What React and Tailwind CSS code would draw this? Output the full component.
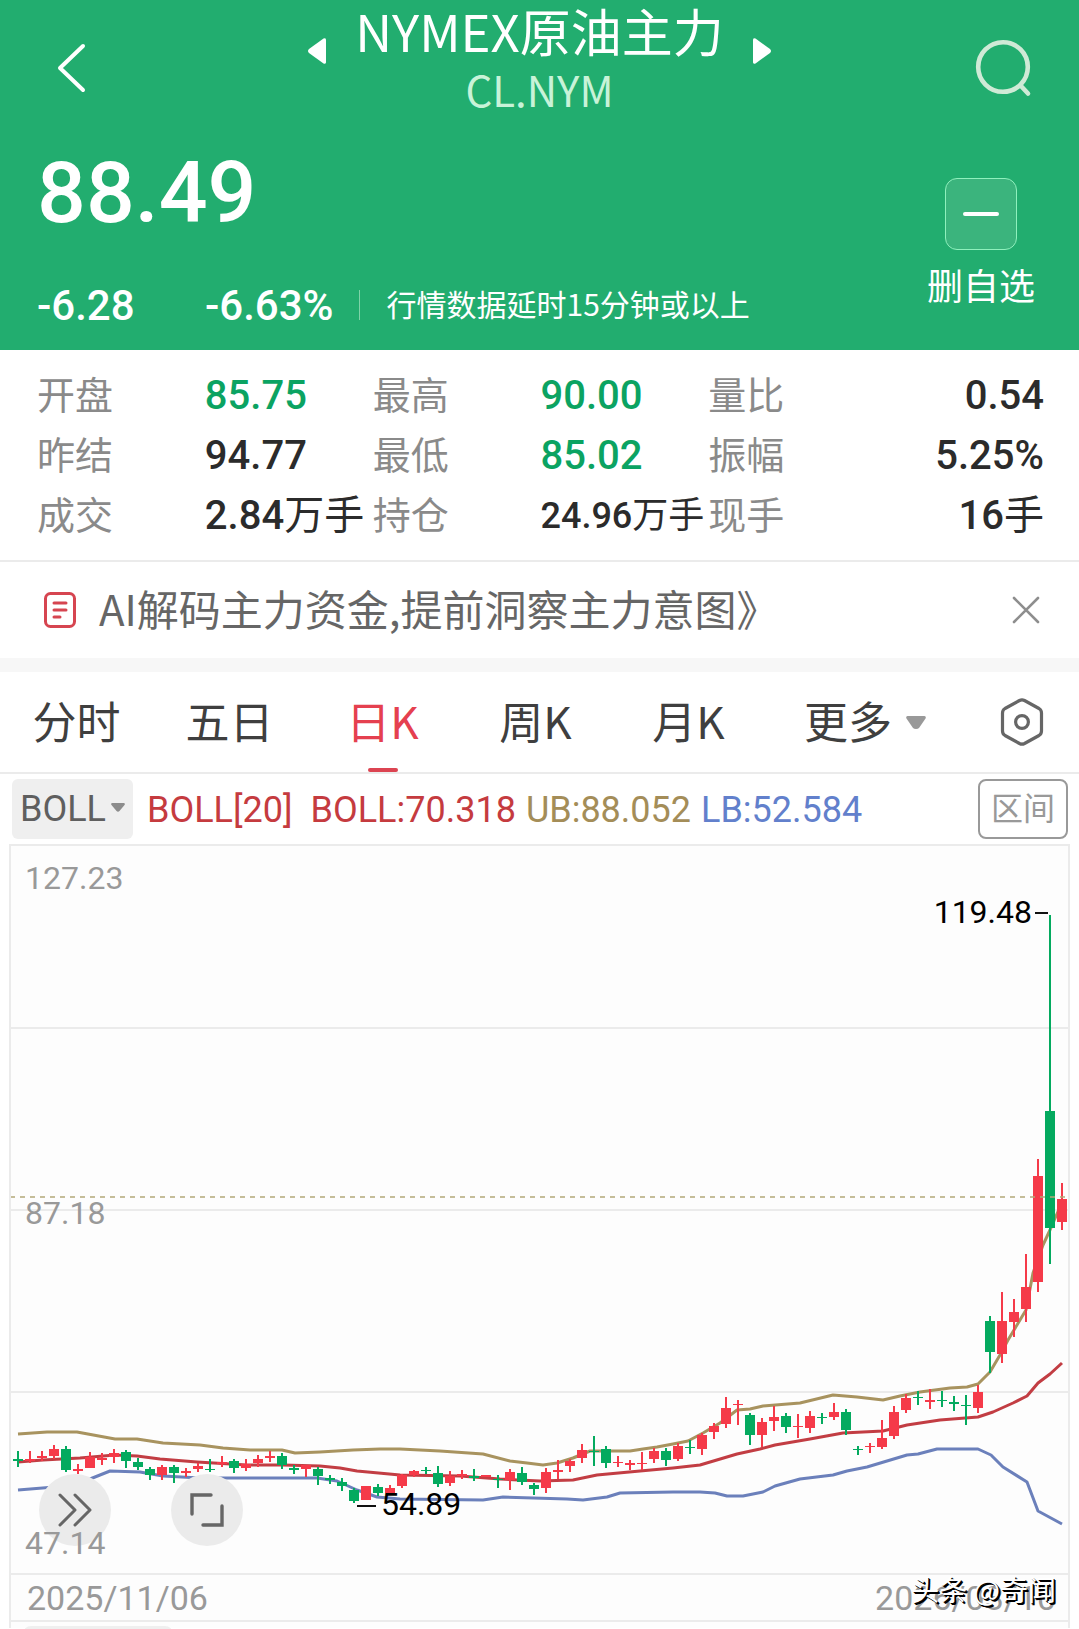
import { useState } from 'react';

const quote = {
  name: 'NYMEX原油主力',
  code: 'CL.NYM',
  price: '88.49',
  change: '-6.28',
  percent: '-6.63%',
  notice: '行情数据延时15分钟或以上'
};

const stats = [
  { label: '开盘', value: '85.75', color: 'text-[#0ba362]' },
  { label: '最高', value: '90.00', color: 'text-[#0ba362]' },
  { label: '量比', value: '0.54', right: true },
  { label: '昨结', value: '94.77' },
  { label: '最低', value: '85.02', color: 'text-[#0ba362]' },
  { label: '振幅', value: '5.25%', right: true },
  { label: '成交', value: '2.84', unit: '万手' },
  { label: '持仓', value: '24.96', unit: '万手', small: true },
  { label: '现手', value: '16', unit: '手', right: true }
];

const periods = ['分时', '五日', '日K', '周K', '月K'];

// [direction, high, low, body top, body bottom] in chart units, 12 units per day
const candles = [
  ['d', 606, 622, 614, 616], ['u', 606, 618, 614, 616], ['u', 606, 616, 611, 613], ['u', 600, 614, 604, 611],
  ['d', 601, 627, 604, 625], ['u', 619, 629, 624, 626], ['u', 607, 623, 612, 623], ['u', 608, 620, 613, 615],
  ['u', 604, 618, 608, 612], ['d', 605, 623, 607, 616], ['d', 613, 625, 617, 622], ['d', 622, 635, 624, 630],
  ['u', 620, 635, 622, 630], ['d', 620, 638, 622, 628], ['u', 623, 632, 626, 628], ['u', 618, 627, 621, 624],
  ['d', 614, 627, 624, 625], ['u', 611, 622, 617, 619], ['d', 614, 628, 616, 623], ['u', 614, 626, 619, 623],
  ['u', 610, 622, 614, 618], ['u', 606, 617, 611, 613], ['d', 608, 624, 611, 620], ['d', 620, 629, 623, 625],
  ['u', 620, 632, 620, 624], ['d', 622, 640, 624, 631], ['d', 630, 639, 633, 635], ['d', 633, 646, 637, 641],
  ['d', 643, 658, 645, 656], ['u', 641, 655, 641, 655], ['d', 639, 651, 642, 648], ['u', 640, 650, 643, 648],
  ['u', 629, 643, 630, 641], ['u', 625, 632, 626, 630], ['d', 622, 629, 625, 626], ['d', 621, 642, 628, 639],
  ['u', 626, 641, 631, 638], ['u', 625, 634, 629, 631], ['d', 624, 636, 631, 633], ['u', 630, 632, 630, 632],
  ['d', 630, 643, 634, 635], ['u', 624, 645, 627, 635], ['d', 622, 640, 628, 637], ['d', 638, 650, 640, 644],
  ['u', 623, 648, 627, 643], ['u', 615, 634, 625, 627], ['u', 614, 627, 616, 621], ['u', 599, 618, 605, 613],
  ['d', 591, 621, 606, 607], ['d', 601, 623, 604, 618], ['u', 611, 622, 617, 618], ['u', 615, 625, 618, 620],
  ['u', 607, 625, 618, 619], ['u', 603, 618, 606, 614], ['d', 603, 621, 606, 615], ['u', 598, 616, 601, 614],
  ['d', 595, 609, 602, 603], ['u', 588, 610, 590, 604], ['u', 578, 594, 581, 587], ['u', 552, 583, 563, 579],
  ['u', 555, 580, 559, 560], ['d', 568, 600, 570, 590], ['u', 573, 602, 577, 590], ['u', 561, 586, 572, 576],
  ['d', 568, 588, 571, 582], ['u', 569, 593, 581, 582], ['u', 566, 588, 571, 583], ['d', 568, 579, 572, 573],
  ['u', 558, 575, 567, 572], ['d', 564, 590, 567, 585], ['d', 601, 610, 604, 605], ['u', 598, 608, 601, 602],
  ['u', 575, 604, 593, 602], ['u', 561, 594, 567, 591], ['u', 549, 568, 553, 565], ['d', 546, 560, 552, 553],
  ['u', 544, 564, 555, 557], ['d', 546, 562, 555, 556], ['d', 551, 566, 557, 559], ['d', 550, 580, 560, 561],
  ['u', 540, 568, 547, 563], ['d', 471, 528, 476, 507], ['u', 447, 518, 476, 509], ['u', 454, 492, 467, 477],
  ['u', 409, 477, 442, 464], ['u', 314, 447, 331, 437], ['d', 70, 419, 266, 383], ['u', 338, 385, 354, 377]
];

const bands = [
  {
    name: 'UB',
    color: '#a8935f',
    points:
      '8,589 37,587 67,587 105,594 127,594 153,598 190,600 213,603 240,605 272,605 285,608 310,607 343,605 370,604 390,604 430,606 473,609 500,616 517,618 533,620 547,618 563,613 580,606 620,606 633,604 647,602 663,599 678,596 693,588 710,578 727,565 740,564 753,561 790,558 823,550 847,552 873,555 890,551 910,547 940,543 957,542 968,539 980,527 990,510 998,495 1016,465 1023,428 1033,400 1040,385 1053,355'
  },
  {
    name: 'MID',
    color: '#c23d43',
    points:
      '8,617 33,615 70,613 105,610 127,611 150,614 187,617 237,620 273,620 310,621 330,623 347,626 390,630 450,631 490,634 530,636 563,635 587,630 630,626 663,623 690,620 727,609 750,604 765,600 800,594 833,588 873,586 897,580 930,575 968,572 983,567 1003,558 1017,551 1028,538 1040,529 1052,518'
  },
  {
    name: 'LB',
    color: '#6b80bb',
    points:
      '8,645 57,641 70,638 100,626 130,627 153,631 190,633 283,633 307,633 327,636 347,645 367,652 390,654 473,655 493,652 557,654 573,655 597,652 610,648 663,647 690,647 705,648 717,651 733,651 753,647 765,641 790,634 823,630 837,626 857,622 897,610 908,609 927,604 968,604 981,610 993,622 1017,637 1028,666 1052,679'
  }
];

const KLineChart = () => (
  <svg viewBox="1 1 1057 727" className="block w-full" aria-hidden="true">
    <path d="M0 183H1059M0 365H1059M0 547H1059" stroke="#ebebeb" strokeWidth="2" />
    {bands.map((band) => (
      <polyline
        key={band.name}
        points={band.points}
        fill="none"
        stroke={band.color}
        strokeWidth="3"
        strokeLinejoin="round"
      />
    ))}
    {candles.map(([dir, high, low, top, bottom], i) => {
      const x = 8 + i * 12;
      const fill = dir === 'u' ? '#f53a49' : '#04aa5f';
      return (
        <g key={i} fill={fill}>
          <rect x={x - 1} y={high} width="2" height={low - high} />
          <rect x={x - 5} y={top} width="10" height={bottom - top} />
        </g>
      );
    })}
    <path d="M0 352H1059" stroke="#b3a878" strokeWidth="1.6" strokeDasharray="5 5" />
    <path d="M1025 68H1038M347 661H366" stroke="#111" strokeWidth="2" />
  </svg>
);

const Header = () => (
  <header className="flex flex-col bg-[#22ad6f] text-white">
    <div className="grid grid-cols-[1fr_auto_1fr] items-start h-[120px] px-[44px]">
      <button aria-label="返回" className="mt-[43px] ml-3 justify-self-start">
        <svg width="32" height="50" viewBox="0 0 32 50" fill="none" stroke="currentColor" strokeWidth="4" strokeLinecap="round" strokeLinejoin="round">
          <path d="M27 3L4 25L27 47" />
        </svg>
      </button>
      <div className="flex items-start gap-7">
        <button aria-label="上一个" className="mt-[37px]">
          <svg width="20" height="28" viewBox="0 0 20 28" fill="currentColor">
            <path d="M19 2.500V25.500Q18.500 27.500 16.500 26.500L2 16Q0 14 2 12L16.500 1.500Q18.500 .500 19 2.500Z" />
          </svg>
        </button>
        <div className="flex flex-col items-center">
          <h1 className="text-[51px] leading-[60px]">{quote.name}</h1>
          <p className="text-[42px] leading-[58px] text-[#c8f3d8]">{quote.code}</p>
        </div>
        <button aria-label="下一个" className="mt-[37px]">
          <svg width="20" height="28" viewBox="0 0 20 28" fill="currentColor">
            <path d="M1 2.500V25.500Q1.500 27.500 3.500 26.500L18 16Q20 14 18 12L3.500 1.500Q1.500 .500 1 2.500Z" />
          </svg>
        </button>
      </div>
      <button aria-label="搜索" className="mt-[38px] justify-self-end">
        <svg width="60" height="60" viewBox="0 0 60 60" fill="none" stroke="#cfead6" strokeWidth="4.600" strokeLinecap="round">
          <circle cx="28" cy="29" r="24.800" />
          <path d="M46 48L53 55.500" />
        </svg>
      </button>
    </div>
    <div className="flex justify-between pl-[37px] pr-[44px] pb-5">
      <div className="flex flex-col pt-6">
        <span className="text-[86px] leading-[98px] font-medium font-[Roboto,sans-serif]">{quote.price}</span>
        <div className="flex items-center h-[50px] mt-[38px]">
          <div className="flex font-[Roboto,sans-serif] text-[42px] font-medium">
            <span className="w-[168px]">{quote.change}</span>
            <span>{quote.percent}</span>
          </div>
          <span className="w-px h-[30px] mx-[26px] bg-[#7fd3a8]" />
          <span className="pb-1 text-[30px]">{quote.notice}</span>
        </div>
      </div>
      <button className="flex flex-col items-center pt-[58px]">
        <span className="flex items-center justify-center size-[72px] rounded-xl border border-[#8ff0bd] bg-[#3bb47d]">
          <span className="w-9 h-1 rounded-full bg-white" />
        </span>
        <span className="mt-3 text-[36px] leading-[44px]">删自选</span>
      </button>
    </div>
  </header>
);

const StatGrid = () => (
  <dl className="grid grid-cols-3 pl-[37px] pr-[35px] pt-[15px] pb-[15px] border-b-2 border-[#ebebeb]">
    {stats.map((item) => (
      <div key={item.label} className="flex items-center h-[60px] whitespace-nowrap">
        <dt className="w-1/2 pb-1.5 text-[38px] text-[#8a8a8a]">{item.label}</dt>
        <dd
          className={`pt-0.5 font-[Roboto,'Noto_Sans_CJK_SC',sans-serif] font-medium ${item.small ? 'text-[36px]' : 'text-[40px]'} ${item.color || 'text-[#2b2b2b]'} ${item.right ? 'ml-auto' : ''}`}
        >
          {item.value}
          {item.unit && <span className="font-normal">{item.unit}</span>}
        </dd>
      </div>
    ))}
  </dl>
);

const TipBar = () => (
  <div className="flex items-center h-[96px] pl-11 pr-[38px]">
    <svg width="32" height="36" viewBox="0 0 32 36" fill="none" stroke="#d64550" strokeWidth="3" strokeLinecap="round">
      <rect x="1.500" y="1.500" width="29" height="33" rx="5" />
      <path d="M10 11H22M10 18H22M10 25H16" />
    </svg>
    <a href="#tip" className="ml-[23px] pb-1.5 text-[42px] text-[#666]">
      AI解码主力资金,提前洞察主力意图》
    </a>
    <button aria-label="关闭" className="ml-auto">
      <svg width="30" height="30" viewBox="0 0 30 30" stroke="#8e8e8e" strokeWidth="2.600" strokeLinecap="round">
        <path d="M3 3L27 27M27 3L3 27" />
      </svg>
    </button>
  </div>
);

const PeriodTabs = ({ active, onChange }) => (
  <div className="grid grid-cols-[repeat(5,153fr)_200fr_114fr] h-[102px] border-b-2 border-[#ebebeb] text-[44px] text-[#3f3f3f]">
    {periods.map((p) => (
      <button
        key={p}
        onClick={() => onChange(p)}
        className={`relative flex items-center justify-center pb-1 ${p === active ? 'text-[#e5404f]' : ''}`}
      >
        {p}
        {p === active && <span className="absolute bottom-0 w-[30px] h-1 rounded-full bg-[#dc4452]" />}
      </button>
    ))}
    <button className="flex items-center justify-center gap-3.5">
      <span className="pb-1">更多</span>
      <svg width="20" height="13" viewBox="0 0 20 13" fill="#999">
        <path d="M1.500 0H18.500Q20.500 .500 19.500 2.500L13 12Q12 13 10 13Q8 13 7 12L.500 2.500Q-.500 .500 1.500 0Z" />
      </svg>
    </button>
    <button aria-label="设置" className="flex items-center justify-center">
      <svg width="44" height="48" viewBox="0 0 44 48" fill="none" stroke="#666" strokeWidth="3.200" strokeLinejoin="round">
        <path d="M19.500 2.500Q22 1.200 24.500 2.500L39 10.500Q41.500 12 41.500 15V33Q41.500 36 39 37.500L24.500 45.500Q22 46.800 19.500 45.500L5 37.500Q2.500 36 2.500 33V15Q2.500 12 5 10.500Z" />
        <circle cx="22" cy="24" r="6.400" />
      </svg>
    </button>
  </div>
);

const IndicatorBar = () => (
  <div className="flex items-center h-[70px] pl-3 pr-[11px] font-[Roboto,'Noto_Sans_CJK_SC',sans-serif] text-[36px]">
    <div className="relative">
      <select
        aria-label="指标"
        defaultValue="BOLL"
        className="appearance-none block w-[121px] h-[60px] pl-2 rounded-md bg-[#efefef] text-[#5f5f5f]"
      >
        <option>BOLL</option>
        <option>MA</option>
      </select>
      <svg width="14" height="9" viewBox="0 0 14 9" fill="#8c8c8c" className="absolute right-2 top-6 pointer-events-none">
        <path d="M1 0H13Q14.500 .500 13.500 2L8.500 8Q7 9.500 5.500 8L.500 2Q-.500 .500 1 0Z" />
      </svg>
    </div>
    <div className="flex gap-2.5 ml-3.5 pt-0.5 whitespace-nowrap">
      <span className="pr-2 text-[#c53b3f]">BOLL[20]</span>
      <span className="text-[#c53b3f]">BOLL:70.318</span>
      <span className="text-[#a48d58]">UB:88.052</span>
      <span className="text-[#6280cc]">LB:52.584</span>
    </div>
    <button className="ml-auto w-[90px] h-[60px] rounded-lg border-2 border-[#999] text-[32px] text-[#999]">区间</button>
  </div>
);

const App = () => {
  const [period, setPeriod] = useState('日K');

  return (
    <div className="min-h-screen bg-white overflow-hidden font-['Noto_Sans_CJK_SC',sans-serif]">
      <Header />
      <StatGrid />
      <TipBar />
      <div className="h-3.5 bg-[#f7f7f7]" />
      <PeriodTabs active={period} onChange={setPeriod} />
      <IndicatorBar />

      <section className="mx-[9px] border-2 border-b-0 border-[#ebebeb] bg-[#fdfdfd] font-[Roboto,sans-serif] text-[32px] leading-9 text-[#999]">
        <div className="relative">
          <KLineChart />
          <button aria-label="展开" className="absolute left-7 bottom-[27px] flex items-center justify-center size-[72px] rounded-full bg-[#ebebeb]">
            <svg width="34" height="34" viewBox="0 0 34 34" fill="none" stroke="#666" strokeWidth="3" strokeLinecap="round" strokeLinejoin="round">
              <path d="M2 2L17 17L2 32M17 2L32 17L17 32" />
            </svg>
          </button>
          <button aria-label="全屏" className="absolute left-40 bottom-[27px] flex items-center justify-center size-[72px] rounded-full bg-[#ebebeb]">
            <svg width="34" height="34" viewBox="0 0 34 34" fill="none" stroke="#666" strokeWidth="3.400" strokeLinecap="round" strokeLinejoin="miter">
              <path d="M2 21V2H21M32 13V32H13" />
            </svg>
          </button>
          <span className="absolute left-3.5 top-3.5">127.23</span>
          <span className="absolute left-3.5 top-[48%]">87.18</span>
          <span className="absolute left-3.5 bottom-3">47.14</span>
          <span className="absolute right-9 top-12 text-black">119.48</span>
          <span className="absolute left-[35%] top-[88%] text-black">54.89</span>
        </div>
        <div className="relative flex items-center justify-between h-[49px] pl-4 pr-3 border-y-2 border-[#ebebeb] text-[34px]">
          <span>2025/11/06</span>
          <span>2026/03/10</span>
          <span className="absolute right-3 -top-1 font-['Noto_Sans_CJK_SC',sans-serif] text-[28px] text-white [text-shadow:2px_2px_0_#000,1px_1px_0_#000]">
            头条 @奇闻
          </span>
        </div>
        <div className="h-1.5 pt-1 pl-3">
          <div className="w-[150px] h-3 rounded-t-lg bg-[#efefef]" />
        </div>
      </section>
    </div>
  );
};

export default App;
